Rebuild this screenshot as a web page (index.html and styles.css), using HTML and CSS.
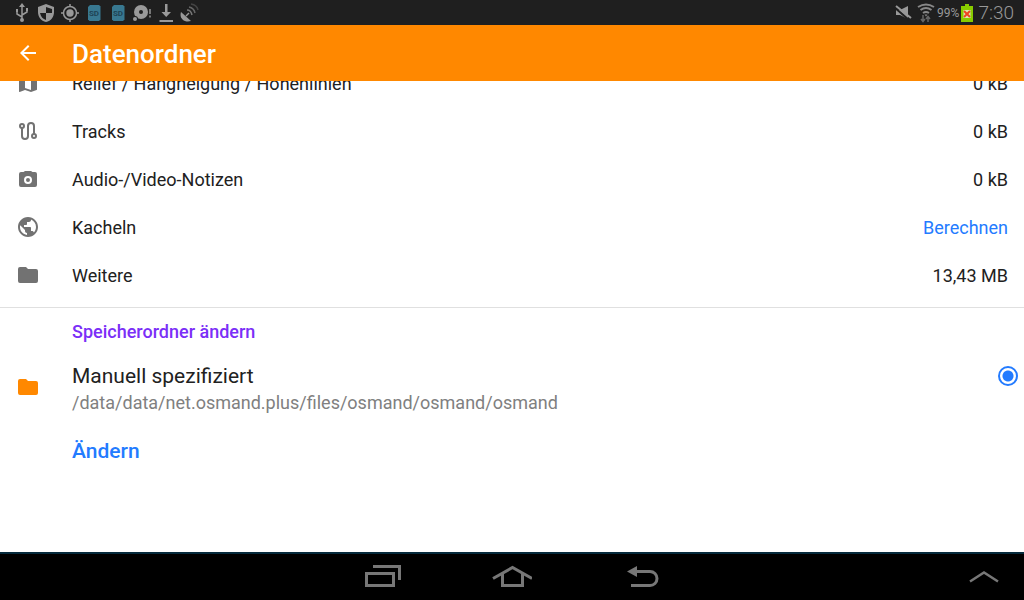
FILE: index.html
```html
<!DOCTYPE html>
<html lang="de">
<head>
    <meta charset="UTF-8">
    <meta name="viewport" content="width=device-width, initial-scale=1.0">
    <title>Datenordner</title>
    <link rel="stylesheet" href="styles.css">
</head>
<body>
    <div class="status-bar">
        <div class="status-icons">
            <svg width="20" height="20" viewBox="0 0 20 20" fill="none" stroke="#999" stroke-width="1.5">
                <path d="M10 3v14M10 14L5 11V8M10 12l5-3V6"/>
                <path d="M10 0l3 4H7zM8 17a2 2 0 1 0 4 0a2 2 0 1 0-4 0zM4 6h2v3H4zM14 5h2v3h-2z" fill="#999" stroke="none"/>
            </svg>
            <svg width="20" height="20" viewBox="0 0 20 20">
                <path d="M10 1l8 3v5c0 5-3 9-8 10c-5-1-8-5-8-10V4z" fill="#999"/>
                <path d="M10 4v6h6c0-1 .2-2 0-4zM10 10v7c-3-1-5-3-6-7z" fill="#1f1f1f"/>
            </svg>
            <svg width="20" height="20" viewBox="0 0 20 20" fill="none" stroke="#999" stroke-width="1.5">
                <circle cx="10" cy="10" r="6.5"/>
                <circle cx="10" cy="10" r="3.7" fill="#999" stroke="none"/>
                <path d="M10 1v3M10 16v3M1 10h3M16 10h3"/>
            </svg>
            <svg width="20" height="20" viewBox="0 0 20 20">
                <path d="M6 2h9l1.500 1.500V16.500L15 18H5.500L4 16.500V4z" fill="#387890"/>
                <text class="sd-text" x="10" y="13" text-anchor="middle">SD</text>
            </svg>
            <svg width="20" height="20" viewBox="0 0 20 20">
                <path d="M6 2h9l1.500 1.500V16.500L15 18H5.500L4 16.500V4z" fill="#387890"/>
                <text class="sd-text" x="10" y="13" text-anchor="middle">SD</text>
            </svg>
            <svg width="20" height="20" viewBox="0 0 20 20" fill="#999">
                <circle cx="9" cy="9" r="7"/>
                <circle cx="9" cy="9" r="2" fill="#1f1f1f"/>
                <circle cx="3" cy="16" r="3" fill="#1f1f1f"/>
                <circle cx="3" cy="16" r="2"/>
                <path d="M17 6h2v5h-2zM17 12.500h2v2h-2z" fill="#777"/>
            </svg>
            <svg width="20" height="20" viewBox="0 0 20 20" fill="#999">
                <path d="M9 1h2.500v8H15l-4.800 5L5.500 9H9zM3.500 17h13.500v2H3.500z"/>
            </svg>
            <svg width="20" height="20" viewBox="0 0 20 20" fill="none" stroke="#777" stroke-width="1.500">
                <path d="M1 9c-2 6 3 11 10 9z" fill="#999" stroke="none"/>
                <path d="M6 13l3-3" stroke="#999"/>
                <path d="M7 7q4 0 5 5"/>
                <path d="M9 4q5 1 6 6" stroke="#666"/>
                <path d="M11 1q6 1 7 6" stroke="#444"/>
            </svg>
        </div>
        <div class="status-info">
            <svg width="20" height="20" viewBox="0 0 20 20">
                <path d="M3 7h4l8-4v13l-8-4H3z" fill="#999"/>
                <path d="M1 4l15 13" stroke="#1f1f1f" stroke-width="2"/>
                <path d="M3 3l15 12" stroke="#999" stroke-width="2"/>
            </svg>
            <svg class="wifi" width="18" height="20" viewBox="0 0 18 20" fill="none" stroke="#888" stroke-width="2">
                <path d="M1 4q8-5 16 0M3.500 7q5.500-4 11 0M6 10q3-2 6 0"/>
                <path d="M7.500 11.500h3L9 13.500z" fill="#888" stroke="none"/>
                <path d="M6 12v6M4 16l2 2.500L8 16M11 19v-5M9 16l2-2.500l2 2.500" stroke="#666" stroke-width="1.500"/>
            </svg>
            <span class="battery-text">99%</span>
            <svg width="12" height="20" viewBox="0 0 12 20">
                <path d="M4 1h4v2h4v16H0V3h4z" fill="#8c0"/>
                <path d="M2.500 7h7v8h-7z" fill="#dde8b0"/>
                <path d="M3 8l6 6M9 8l-6 6" stroke="#e42" stroke-width="2"/>
            </svg>
            <span class="clock">7:30</span>
        </div>
    </div>

    <header class="app-bar">
        <button class="back-button" type="button" aria-label="Zurück">
            <svg width="24" height="24" viewBox="0 0 24 24" fill="#fff">
                <path d="M20 11H7.830l5.590-5.590L12 4l-8 8 8 8 1.410-1.410L7.830 13H20z"/>
            </svg>
        </button>
        <h1>Datenordner</h1>
    </header>

    <main>
        <ul class="usage-list">
            <li>
                <svg width="24" height="24" viewBox="0 0 24 24" fill="#727272">
                    <path d="M20.500 3l-.16.030L15 5.100 9 3 3.360 4.900c-.210.070-.360.250-.360.480V20.500c0 .280.220.500.500.500l.160-.030L9 18.900l6 2.100 5.640-1.900c.210-.070.360-.250.360-.480V3.500c0-.280-.220-.500-.500-.500zM15 19l-6-2.110V5l6 2.110V19z"/>
                </svg>
                <span class="name">Relief / Hangneigung / Höhenlinien</span>
                <span>0 kB</span>
            </li>
            <li>
                <svg width="24" height="24" viewBox="0 0 24 24" fill="none" stroke="#727272" stroke-width="2">
                    <circle cx="6" cy="7" r="2"/>
                    <circle cx="18" cy="17" r="2"/>
                    <path d="M6 9v8a3 3 0 0 0 6 0V7a3 3 0 0 1 6 0v8"/>
                </svg>
                <span class="name">Tracks</span>
                <span>0 kB</span>
            </li>
            <li>
                <svg width="24" height="24" viewBox="0 0 24 24">
                    <path d="M9 4L7.500 5H5a2 2 0 0 0-2 2v11a2 2 0 0 0 2 2h14a2 2 0 0 0 2-2V7a2 2 0 0 0-2-2h-2.500L15 4z" fill="#727272"/>
                    <circle cx="12" cy="13" r="3" fill="none" stroke="#fff" stroke-width="2"/>
                </svg>
                <span class="name">Audio-/Video-Notizen</span>
                <span>0 kB</span>
            </li>
            <li>
                <svg width="24" height="24" viewBox="0 0 24 24" fill="#727272">
                    <path d="M12 2C6.480 2 2 6.480 2 12s4.480 10 10 10 10-4.480 10-10S17.520 2 12 2zm-1 17.930c-3.950-.490-7-3.850-7-7.930 0-.620.080-1.210.210-1.790L9 15v1c0 1.100.900 2 2 2v1.930zm6.900-2.540c-.260-.810-1-1.390-1.900-1.390h-1v-3c0-.550-.450-1-1-1H8v-2h2c.550 0 1-.450 1-1V7h2c1.100 0 2-.900 2-2v-.410c2.930 1.190 5 4.060 5 7.410 0 2.080-.800 3.970-2.100 5.390z"/>
                </svg>
                <span class="name">Kacheln</span>
                <button class="link-button" type="button">Berechnen</button>
            </li>
            <li>
                <svg width="24" height="24" viewBox="0 0 24 24" fill="#727272">
                    <path d="M10 4H4a2 2 0 0 0-2 2v12a2 2 0 0 0 2 2h16a2 2 0 0 0 2-2V8a2 2 0 0 0-2-2h-8z"/>
                </svg>
                <span class="name">Weitere</span>
                <span>13,43 MB</span>
            </li>
        </ul>

        <section class="storage">
            <h2>Speicherordner ändern</h2>
            <div class="option">
                <svg class="folder" width="24" height="24" viewBox="0 0 24 24" fill="#ff8800">
                    <path d="M10 4H4a2 2 0 0 0-2 2v12a2 2 0 0 0 2 2h16a2 2 0 0 0 2-2V8a2 2 0 0 0-2-2h-8z"/>
                </svg>
                <label for="manual">
                    <span class="option-title">Manuell spezifiziert</span>
                    <span class="option-path">/data/data/net.osmand.plus/files/osmand/osmand/osmand</span>
                </label>
                <input type="radio" id="manual" name="storage" checked>
            </div>
            <button class="link-button change-button" type="button">Ändern</button>
        </section>
    </main>

    <nav class="nav-bar">
        <div class="nav-main">
            <button type="button" aria-label="Letzte Apps">
                <svg width="40" height="30" viewBox="0 0 40 30" fill="none" stroke="#777" stroke-width="3">
                    <path d="M4.500 11.500h27v12h-27zM11 4.500h26.500V18"/>
                </svg>
            </button>
            <button type="button" aria-label="Startseite">
                <svg width="40" height="30" viewBox="0 0 40 30" fill="none" stroke="#777" stroke-width="3">
                    <path d="M1 16.500L20.500 5.500L40 16.500M10.500 12v11.500h20V12"/>
                </svg>
            </button>
            <button type="button" aria-label="Zurück">
                <svg width="40" height="30" viewBox="0 0 40 30" fill="none" stroke="#777" stroke-width="3">
                    <path d="M11 9.500h17a7 7 0 0 1 0 14H9"/>
                    <path d="M5 9.500L15 4v11z" fill="#777" stroke="none"/>
                </svg>
            </button>
        </div>
        <button type="button" aria-label="Mehr">
            <svg width="40" height="30" viewBox="0 0 40 30" fill="none" stroke="#777" stroke-width="2.500">
                <path d="M6 19.500l14-9 14 9"/>
            </svg>
        </button>
    </nav>
</body>
</html>
```

FILE: styles.css
```css
* {
    box-sizing: border-box;
}

body {
    margin: 0;
    height: 100vh;
    display: flex;
    flex-direction: column;
    background-color: #fff;
    color: #212121;
    font-family: Roboto, "Liberation Sans", sans-serif;
    font-size: 18px;
}

svg {
    display: block;
    flex-shrink: 0;
}

button {
    padding: 0;
    border: none;
    background: none;
    font-family: inherit;
    cursor: pointer;
}

.status-bar {
    display: flex;
    justify-content: space-between;
    align-items: center;
    flex-shrink: 0;
    height: 25px;
    padding: 0 10px 0 12px;
    background-color: #1f1f1f;
    color: #999;
}

.status-icons {
    display: flex;
    gap: 4px;
}

.status-info {
    display: flex;
    align-items: center;
}

.wifi {
    margin-left: 4px;
}

.sd-text {
    font-size: 8px;
    font-weight: bold;
    fill: #1f4455;
}

.battery-text {
    margin: 0 2px;
    font-size: 12px;
}

.clock {
    margin-left: 5px;
    font-size: 19px;
    font-weight: 300;
}

.app-bar {
    display: flex;
    align-items: center;
    gap: 32px;
    flex-shrink: 0;
    height: 56px;
    padding: 0 16px;
    background-color: #ff8800;
    color: #fff;
}

h1 {
    margin: 0;
    padding-top: 2px;
    font-size: 26px;
    font-weight: 500;
}

main {
    flex: 1;
    overflow: hidden;
}

/* list is scrolled a little under the app bar */
.usage-list {
    list-style: none;
    margin: -22px 0 0;
    padding: 0 0 8px;
    border-bottom: 1px solid #e0e0e0;
}

.usage-list li {
    display: flex;
    align-items: center;
    height: 48px;
    padding: 0 16px;
}

.name {
    flex: 1;
    margin-left: 32px;
}

.link-button {
    color: #237bff;
    font-size: 18px;
}

h2 {
    margin: 0;
    padding-left: 72px;
    color: #7b2ff7;
    font-size: 18px;
    font-weight: 500;
    line-height: 48px;
}

.option {
    display: flex;
    padding: 6px 6px 0 16px;
}

.folder {
    margin-top: 13px;
}

.option label {
    flex: 1;
    margin-left: 32px;
}

.option-title,
.option-path {
    display: block;
}

.option-title {
    font-size: 21px;
    line-height: 28px;
}

.option-path {
    color: #808080;
    line-height: 26px;
}

.option input {
    appearance: none;
    width: 20px;
    height: 20px;
    margin: 4px 0 0;
    border: 2px solid #237bff;
    border-radius: 50%;
    background: radial-gradient(circle, #237bff 5px, transparent 6px);
}

.change-button {
    margin: 21px 0 0 72px;
    font-size: 21px;
    font-weight: 500;
    line-height: 28px;
}

.nav-bar {
    display: flex;
    align-items: center;
    flex-shrink: 0;
    height: 48px;
    padding-right: 20px;
    border-top: 2px solid #052a3c;
    background-color: #000;
}

.nav-main {
    display: flex;
    flex: 1;
    justify-content: center;
    gap: 90px;
    padding-left: 60px;
}
```
